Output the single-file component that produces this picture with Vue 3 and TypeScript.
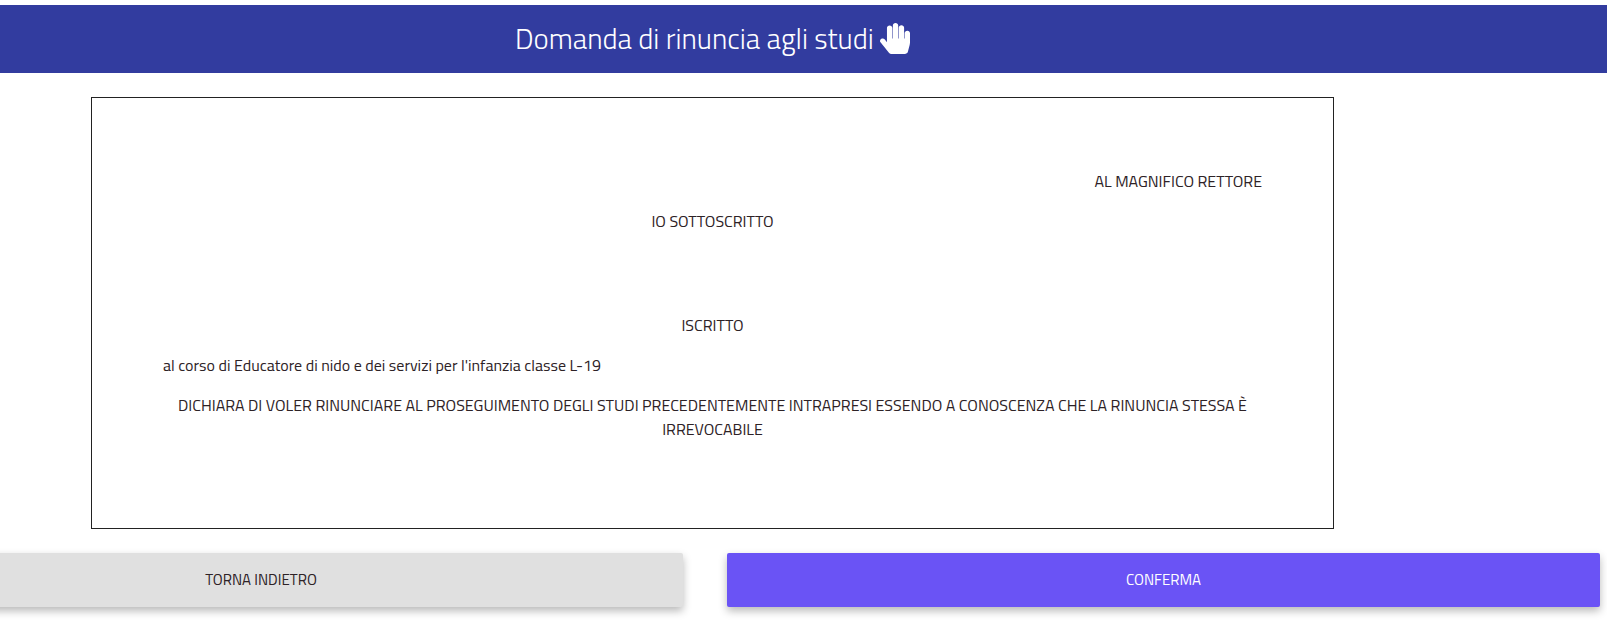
<script setup lang="ts">
const title = 'Domanda di rinuncia agli studi'
</script>

<template>
  <div class="page">
    <header class="bar">
      <div class="bar-inner">
        <h1>{{ title }}</h1>
        <svg class="hand" viewBox="0 0 448 512" preserveAspectRatio="none" aria-hidden="true"><path fill="#fff" d="M408.781 128.007C386.356 127.578 368 146.36 368 168.79V256h-8V79.79c0-22.43-18.356-41.212-40.781-40.783C297.488 39.423 280 57.169 280 79v177h-8V40.79C272 18.36 253.644-.422 231.219.007 209.488.423 192 18.169 192 40v216h-8V80.79c0-22.43-18.356-41.212-40.781-40.783C121.488 40.423 104 58.169 104 80v235.992l-31.648-43.519c-12.993-17.866-38.009-21.817-55.877-8.823-17.865 12.994-21.815 38.01-8.822 55.877l125.601 172.705A48 48 0 0 0 172.073 512h197.59c22.274 0 41.622-15.324 46.724-37.006l26.508-112.66a192.011 192.011 0 0 0 5.104-43.975V168c.001-22.459-18.356-40.422-38.218-39.993z"/></svg>
      </div>
    </header>
    <main class="letter">
      <p class="right">AL MAGNIFICO RETTORE</p>
      <p class="center sotto">IO SOTTOSCRITTO</p>
      <p class="center iscritto">ISCRITTO</p>
      <p class="course">al corso di Educatore di nido e dei servizi per l'infanzia classe L-19</p>
      <p class="center dich">DICHIARA DI VOLER RINUNCIARE AL PROSEGUIMENTO DEGLI STUDI PRECEDENTEMENTE INTRAPRESI ESSENDO A CONOSCENZA CHE LA RINUNCIA STESSA È IRREVOCABILE</p>
    </main>
    <div class="actions">
      <button class="btn back" type="button">TORNA INDIETRO</button>
      <button class="btn ok" type="button">CONFERMA</button>
    </div>
  </div>
</template>

<style>
html, body { margin: 0; background: #fff; }
</style>

<style scoped>
.page {
  width: 1607px;
  height: 622px;
  overflow: hidden;
  padding-top: 5px;
  box-sizing: border-box;
  font-family: "Titillium Web", "Open Sans", "Noto Sans", sans-serif;
  color: #2d2226;
}
.bar {
  height: 68px;
  background: #323c9f;
  color: #fff;
  display: flex;
  align-items: center;
}
.bar-inner {
  margin-left: 515px;
  display: flex;
  align-items: center;
  gap: 6px;
}
h1 {
  margin: -2px 0 0;
  font-size: 28.8px;
  font-weight: 300;
  line-height: 38px;
}
.hand { width: 30px; height: 31px; margin-top: -2px; }
.letter {
  box-sizing: border-box;
  width: 1243px;
  height: 432px;
  margin: 24px 0 0 91px;
  border: 1px solid #222;
  padding: 71px 71px 0;
  font-size: 16px;
  line-height: 24px;
}
p { margin: 0; }
.right { text-align: right; }
.center { text-align: center; }
.sotto { margin-top: 16px; }
.iscritto { margin-top: 80px; }
.course { margin-top: 16px; }
.dich { margin-top: 16px; }
.actions {
  margin-top: 24px;
  margin-left: -161px;
  display: flex;
  align-items: flex-start;
}
.btn {
  flex: none;
  height: 54px;
  border: 0;
  border-radius: 2px;
  padding: 0 0 2px;
  font: inherit;
  font-size: 15px;
  box-shadow: 0 4px 8px rgba(0,0,0,.28);
}
.back { width: 844px; background: #e0e0e0; color: #2d2226; }
.ok { width: 873px; margin-left: 44px; background: #6a53f5; color: #fff; }
</style>
